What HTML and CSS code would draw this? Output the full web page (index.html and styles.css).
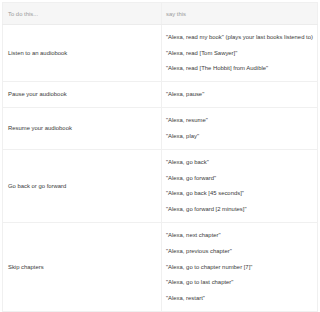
FILE: index.html
```html
<!DOCTYPE html>
<html lang="en">
<head>
<meta charset="UTF-8" />
<title>Alexa audiobook commands</title>
<link rel="stylesheet" href="styles.css">
</head>
<body>

<table class="commands">
  <thead>
    <tr>
      <th class="task">To do this...</th>
      <th>say this</th>
    </tr>
  </thead>
  <tbody>
    <tr>
      <td class="task">Listen to an audiobook</td>
      <td>
        <p>"Alexa, read my book" (plays your last books listened to)</p>
        <p>"Alexa, read [Tom Sawyer]"</p>
        <p>"Alexa, read [The Hobbit] from Audible"</p>
      </td>
    </tr>
    <tr>
      <td class="task">Pause your audiobook</td>
      <td>
        <p>"Alexa, pause"</p>
      </td>
    </tr>
    <tr>
      <td class="task">Resume your audiobook</td>
      <td>
        <p>"Alexa, resume"</p>
        <p>"Alexa, play"</p>
      </td>
    </tr>
    <tr>
      <td class="task">Go back or go forward</td>
      <td>
        <p>"Alexa, go back"</p>
        <p>"Alexa, go forward"</p>
        <p>"Alexa, go back [45 seconds]"</p>
        <p>"Alexa, go forward [2 minutes]"</p>
      </td>
    </tr>
    <tr>
      <td class="task">Skip chapters</td>
      <td>
        <p>"Alexa, next chapter"</p>
        <p>"Alexa, previous chapter"</p>
        <p>"Alexa, go to chapter number [7]"</p>
        <p>"Alexa, go to last chapter"</p>
        <p>"Alexa, restart"</p>
      </td>
    </tr>
  </tbody>
</table>

</body>
</html>
```
FILE: styles.css
```css
body {
  margin: 2px 0 0 2px;
  background: #fff;
  font-family: "Liberation Sans", Arial, sans-serif;
  font-size: 5.9px;
  color: #3a3a3a;
}
.commands {
  width: 316px;
  table-layout: fixed;
  border-collapse: collapse;
  border: 1px solid #f0f0f0;
  white-space: nowrap;
}
.commands th {
  background: #f6f6f6;
  color: #9a9a9a;
  font-weight: normal;
  text-align: left;
  line-height: 7px;
  padding: 8px 4px 6px;
  border-bottom: 1px solid #ececec;
}
.commands td {
  line-height: 7px;
  padding: 9px 4px 9px;
  border-bottom: 1px solid #f0f0f0;
  vertical-align: top;
}
.commands .task {
  width: 149px;
  padding-left: 5px;
  border-right: 1px solid #f0f0f0;
}
.commands td.task {
  vertical-align: middle;
}
.commands p {
  margin: 0 0 8.7px;
}
.commands p:last-child {
  margin-bottom: 0;
}
```
